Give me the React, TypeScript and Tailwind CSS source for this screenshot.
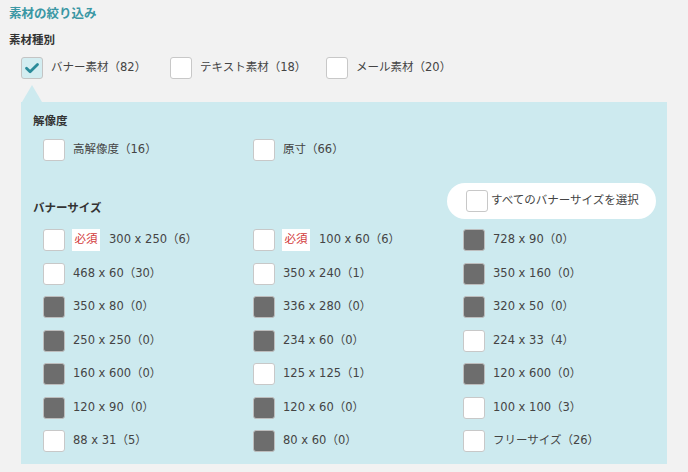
import React from 'react';

const font = { fontFamily: '"DejaVu Sans", "Noto Sans CJK JP", sans-serif' };

type Size = { label: string; disabled?: boolean; required?: boolean };

const sizes: Size[] = [
  { label: '300 x 250（6）', required: true },
  { label: '100 x 60（6）', required: true },
  { label: '728 x 90（0）', disabled: true },
  { label: '468 x 60（30）' },
  { label: '350 x 240（1）' },
  { label: '350 x 160（0）', disabled: true },
  { label: '350 x 80（0）', disabled: true },
  { label: '336 x 280（0）', disabled: true },
  { label: '320 x 50（0）', disabled: true },
  { label: '250 x 250（0）', disabled: true },
  { label: '234 x 60（0）', disabled: true },
  { label: '224 x 33（4）' },
  { label: '160 x 600（0）', disabled: true },
  { label: '125 x 125（1）' },
  { label: '120 x 600（0）', disabled: true },
  { label: '120 x 90（0）', disabled: true },
  { label: '120 x 60（0）', disabled: true },
  { label: '100 x 100（3）' },
  { label: '88 x 31（5）' },
  { label: '80 x 60（0）', disabled: true },
  { label: 'フリーサイズ（26）' },
];

function Box({ checked, disabled }: { checked?: boolean; disabled?: boolean }) {
  if (disabled) {
    return <span className="block w-[22px] h-[22px] shrink-0 rounded-[3px] border border-[#bdbdbd] bg-[#6d6d6d]" />;
  }
  if (checked) {
    return (
      <span className="flex items-center justify-center w-[22px] h-[22px] shrink-0 rounded-[3px] border border-[#c4c4c4] bg-[#d3edf1]">
        <svg width="16" height="16" viewBox="0 0 16 16" fill="none">
          <path d="M2.5 8.2l3.6 3.6L13.5 4.4" stroke="#2a8b9a" strokeWidth="2.8" strokeLinecap="round" strokeLinejoin="round" />
        </svg>
      </span>
    );
  }
  return <span className="block w-[22px] h-[22px] shrink-0 rounded-[3px] border border-[#c8c8c8] bg-white" />;
}

function Option({ label, checked }: { label: string; checked?: boolean }) {
  return (
    <label className="flex items-center gap-[8px] cursor-pointer">
      <Box checked={checked} />
      <span className="text-[11.5px] text-[#444]">{label}</span>
    </label>
  );
}

export default function App() {
  return (
    <div className="w-[688px] h-[472px] bg-[#f2f2f2] pl-[9px] pt-[5px] overflow-hidden" style={font}>
      <h2 className="text-[12.5px] leading-[18px] font-bold text-[#3a97a4]">素材の絞り込み</h2>
      <h3 className="mt-[8px] text-[11.5px] leading-[18px] font-bold text-[#333]">素材種別</h3>

      <div className="mt-[8px] pl-[12px] flex items-center">
        <div className="w-[149px]"><Option label="バナー素材（82）" checked /></div>
        <div className="w-[156px]"><Option label="テキスト素材（18）" /></div>
        <Option label="メール素材（20）" />
      </div>

      {/* pointer to the panel */}
      <div className="mt-[6px] ml-[13px] w-0 h-0 border-l-[10px] border-r-[10px] border-b-[17px] border-l-transparent border-r-transparent border-b-[#cdeaef]" />

      <div className="ml-[12px] w-[646px] h-[362px] bg-[#cdeaef] pl-[12px] pr-[11px] pt-[10px]">
        <h4 className="text-[11.5px] leading-[18px] font-bold text-[#333]">解像度</h4>
        <div className="mt-[9px] ml-[10px] grid grid-cols-[210px_210px]">
          <Option label="高解像度（16）" />
          <Option label="原寸（66）" />
        </div>

        <div className="mt-[22px] flex items-end justify-between">
          <h4 className="mb-[2px] text-[11.5px] leading-[18px] font-bold text-[#333]">バナーサイズ</h4>
          <label className="flex items-center gap-[3px] h-[36px] w-[209px] pl-[19px] rounded-full bg-white cursor-pointer">
            <Box />
            <span className="text-[11.5px] text-[#444] whitespace-nowrap">すべてのバナーサイズを選択</span>
          </label>
        </div>

        <div className="mt-[10px] ml-[10px] grid grid-cols-[210px_210px_210px] gap-y-[11.5px]">
          {sizes.map((s) => (
            <div key={s.label} className="flex items-center h-[22px]">
              <Box disabled={s.disabled} />
              {s.required ? (
                <>
                  <span className="ml-[7px] flex items-center justify-center w-[28px] h-[22px] bg-white text-[11.5px] text-[#d23a3a]">必須</span>
                  <span className="ml-[9px] text-[11.5px] text-[#444]">{s.label}</span>
                </>
              ) : (
                <span className="ml-[8px] text-[11.5px] text-[#444]">{s.label}</span>
              )}
            </div>
          ))}
        </div>
      </div>
    </div>
  );
}
